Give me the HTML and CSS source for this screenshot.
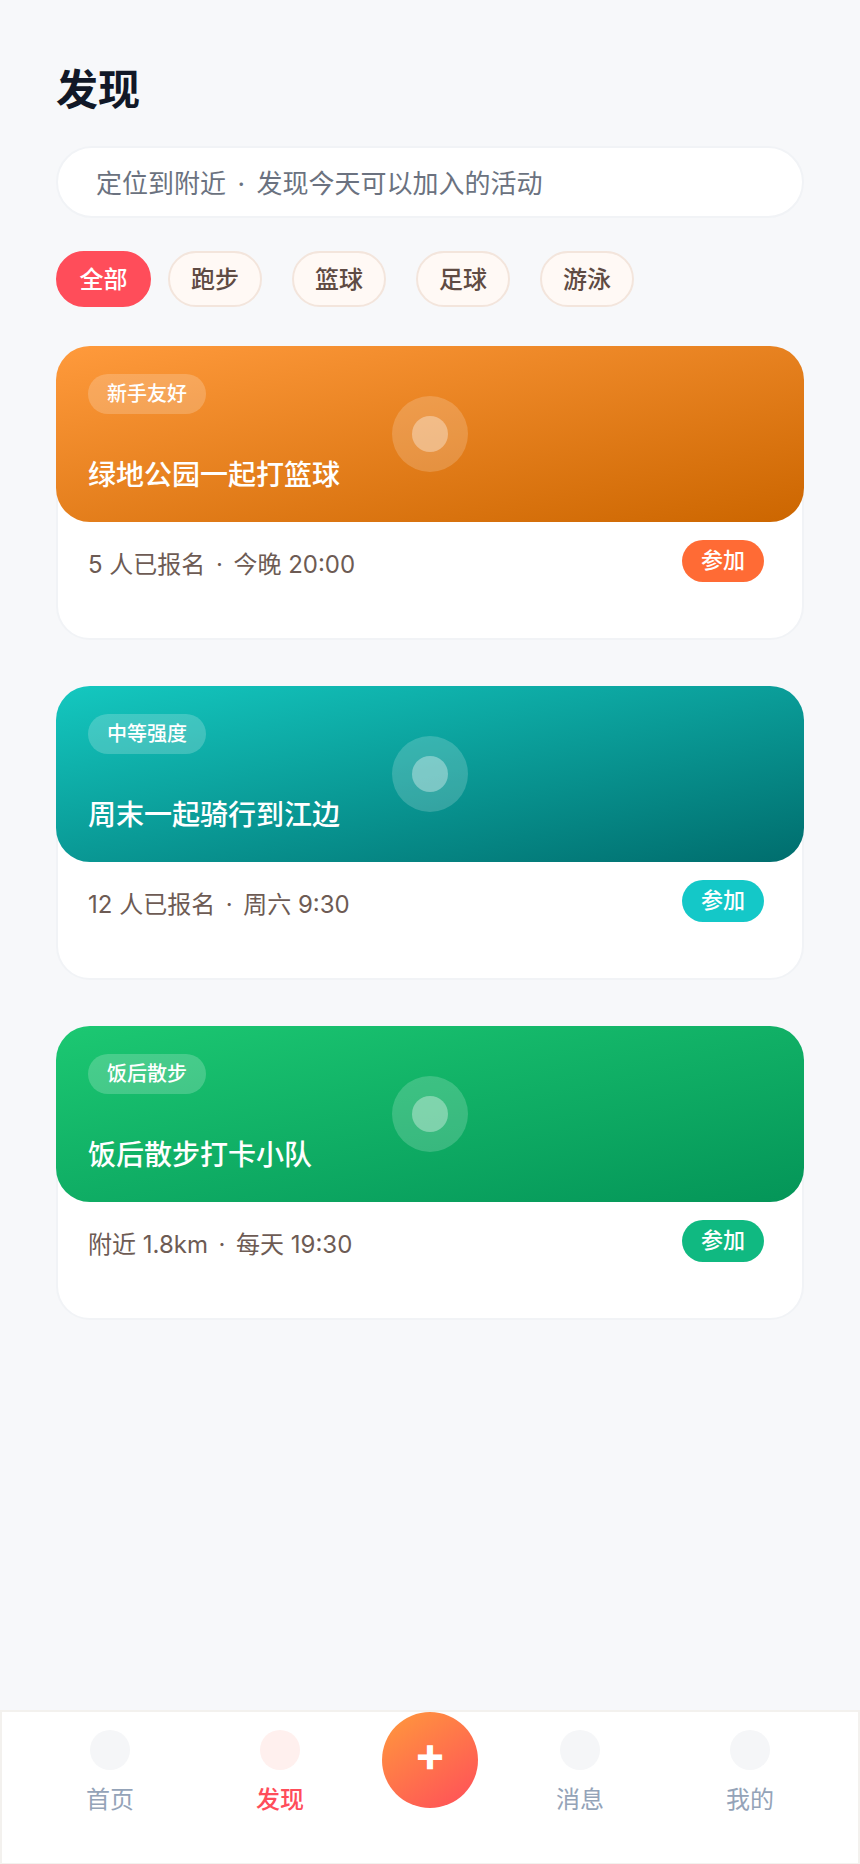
FILE: index.html
```html
<!DOCTYPE html>
<html lang="zh">
<head>
  <meta charset="UTF-8">
  <meta name="viewport" content="width=device-width, initial-scale=1.0">
  <title>发现</title>
  <link rel="stylesheet" href="styles.css">
</head>
<body>
  <main class="page">
    <h1 class="title">发现</h1>
    <div class="search">定位到附近 <span class="sep">·</span> 发现今天可以加入的活动</div>

    <div class="chips">
      <span class="chip active">全部</span>
      <span class="chip">跑步</span>
      <span class="chip">篮球</span>
      <span class="chip">足球</span>
      <span class="chip">游泳</span>
    </div>

    <section class="card">
      <div class="hero orange">
        <span class="tag">新手友好</span>
        <span class="dot"><i></i></span>
        <h2 class="card-title">绿地公园一起打篮球</h2>
      </div>
      <div class="card-body">
        <span class="meta">5 人已报名 <span class="sep">·</span> 今晚 20:00</span>
        <button class="join join-orange">参加</button>
      </div>
    </section>

    <section class="card">
      <div class="hero teal">
        <span class="tag">中等强度</span>
        <span class="dot"><i></i></span>
        <h2 class="card-title">周末一起骑行到江边</h2>
      </div>
      <div class="card-body">
        <span class="meta">12 人已报名 <span class="sep">·</span> 周六 9:30</span>
        <button class="join join-teal">参加</button>
      </div>
    </section>

    <section class="card">
      <div class="hero green">
        <span class="tag">饭后散步</span>
        <span class="dot"><i></i></span>
        <h2 class="card-title">饭后散步打卡小队</h2>
      </div>
      <div class="card-body">
        <span class="meta">附近 1.8km <span class="sep">·</span> 每天 19:30</span>
        <button class="join join-green">参加</button>
      </div>
    </section>
  </main>

  <nav class="tabbar">
    <a class="tab"><span class="tab-icon"></span>首页</a>
    <a class="tab current"><span class="tab-icon"></span>发现</a>
    <div class="fab-slot"><button class="fab">+</button></div>
    <a class="tab"><span class="tab-icon"></span>消息</a>
    <a class="tab"><span class="tab-icon"></span>我的</a>
  </nav>
</body>
</html>
```

FILE: styles.css
```css
* { box-sizing: border-box; }
html, body { height: 100%; }
body { margin: 0; background: #f7f8fa; font-family: Inter, "Noto Sans CJK SC", sans-serif; display: flex; flex-direction: column; min-height: 1864px; }

.page { flex: 1; padding: 60px 56px 0; }
.title { margin: 0; font-size: 42px; line-height: 60px; font-weight: 700; color: #111827; }

.search { margin-top: 26px; height: 72px; line-height: 72px; padding-left: 38px; background: #fff; border: 2px solid #f1f3f6; border-radius: 36px; font-size: 26px; color: #6b7280; }
.sep { margin: 0 .16em; }

.chips { display: flex; margin-top: 33px; }
.chip { width: 94px; height: 56px; line-height: 54px; margin-right: 30px; text-align: center; font-size: 24px; font-weight: 500; color: #5f4b43; background: #fff9f5; border: 2px solid #f3e5dc; border-radius: 28px; }
.chip.active { width: 95px; margin-right: 17px; color: #fff; background: #ff4d5a; border-color: #ff4d5a; }

.card { position: relative; height: 294px; margin-top: 39px; background: #fff; border: 2px solid #f1f3f6; border-radius: 34px; }
.card + .card { margin-top: 46px; }

.hero { position: relative; height: 176px; margin: -2px -2px 0; padding: 28px 32px 0; border-radius: 34px; display: flex; flex-direction: column; align-items: flex-start; color: #fff; }
.orange { background: linear-gradient(168deg, #ff9a3c, #cc6600); }
.teal { background: linear-gradient(168deg, #14c8c0, #006d6d); }
.green { background: linear-gradient(168deg, #1cc872, #049558); }

.tag { width: 118px; height: 40px; line-height: 40px; text-align: center; font-size: 20px; font-weight: 500; background: rgba(255, 255, 255, .2); border-radius: 20px; }
.card-title { margin: 39px 0 0; font-size: 28px; line-height: 44px; font-weight: 500; }

.dot { position: absolute; left: 336px; top: 50px; width: 76px; height: 76px; display: flex; align-items: center; justify-content: center; background: rgba(255, 255, 255, .18); border-radius: 50%; }
.dot i { width: 36px; height: 36px; background: rgba(255, 255, 255, .35); border-radius: 50%; }

.card-body { display: flex; justify-content: space-between; align-items: flex-start; padding: 18px 38px 0 30px; }
.meta { margin-top: 6px; font-size: 24px; line-height: 38px; color: #6d5b54; }
.join { width: 82px; height: 42px; padding: 0 0 6px; border: 0; border-radius: 21px; color: #fff; font-family: inherit; font-size: 22px; font-weight: 500; }
.join-orange { background: #ff6b35; }
.join-teal { background: #14c8c8; }
.join-green { background: #10b981; }

.tabbar { height: 154px; display: flex; justify-content: center; background: #fff; border: 2px solid #f3f1ee; border-bottom-width: 1px; }
.tab { flex: 0 0 170px; padding-top: 18px; display: flex; flex-direction: column; align-items: center; font-size: 24px; line-height: 34px; color: #94a3b8; }
.tab-icon { width: 40px; height: 40px; margin-bottom: 13px; background: #f5f6f8; border-radius: 50%; }
.tab.current { color: #ff4d5a; font-weight: 500; }
.tab.current .tab-icon { background: #fff0ee; }
.fab-slot { flex: 0 0 130px; display: flex; justify-content: center; }
.fab { display: block; width: 96px; height: 96px; padding: 0 0 12px; border: 0; border-radius: 50%; color: #fff; font-family: inherit; font-size: 48px; line-height: 1; font-weight: 700; background: linear-gradient(145deg, #ff9a3c, #ff4d5a); }
```
